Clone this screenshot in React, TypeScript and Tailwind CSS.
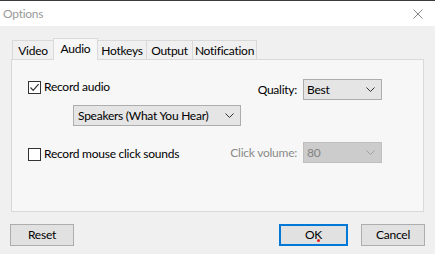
import React from 'react';

function Chevron({ color = '#333' }: { color?: string }) {
  return (
    <svg width="9" height="5" viewBox="0 0 9 5" className="shrink-0">
      <path d="M0.5 0.5 L4.5 4.5 L8.5 0.5" fill="none" stroke={color} strokeWidth="1" />
    </svg>
  );
}

function Checkbox({ checked }: { checked?: boolean }) {
  return (
    <div className="w-[13px] h-[13px] border border-[#333] bg-white flex items-center justify-center shrink-0">
      {checked && (
        <svg width="11" height="11" viewBox="0 0 11 11">
          <path d="M1.5 5.5 L4.2 8.3 L9.6 2.2" fill="none" stroke="#333" strokeWidth="1.2" />
        </svg>
      )}
    </div>
  );
}

export default function App() {
  const tabs = [
    { label: 'Video', w: 'w-[42px]' },
    { label: 'Audio', w: 'w-[45px]', active: true },
    { label: 'Hotkeys', w: 'w-[50px]' },
    { label: 'Output', w: 'w-[47px]' },
    { label: 'Notification', w: 'w-[65px]' },
  ];

  return (
    <div
      className="w-[435px] h-[254px] bg-[#f0f0f0] text-[12px] tracking-[-0.25px] text-black flex flex-col overflow-hidden whitespace-nowrap"
      style={{ fontFamily: 'Lato, "Noto Sans", sans-serif' }}
    >
      {/* title bar */}
      <div className="h-[26px] bg-white border-t border-[#3a3a3a] flex items-center justify-between pl-[3px] pr-[12px] shrink-0">
        <span className="text-[#9a9a9a] text-[12px] leading-none">Options</span>
        <svg width="10" height="10" viewBox="0 0 10 10">
          <path d="M0.5 0.5 L9.5 9.5 M9.5 0.5 L0.5 9.5" stroke="#888" strokeWidth="1" />
        </svg>
      </div>

      {/* tabs */}
      <div className="pl-[12px] pt-[11px] flex items-end h-[33px] shrink-0 relative z-10">
        {tabs.map((t) =>
          t.active ? (
            <div
              key={t.label}
              className={`${t.w} h-[22px] -ml-px mb-[-1px] bg-[#f7f7f7] border border-b-0 border-[#d9d9d9] flex items-start justify-center pt-[2px] leading-[16px]`}
            >
              {t.label}
            </div>
          ) : (
            <div
              key={t.label}
              className={`${t.w} h-[19px] -ml-px first:ml-0 border border-b-0 border-[#d9d9d9] flex items-center justify-center leading-none pt-[2px]`}
            >
              {t.label}
            </div>
          )
        )}
      </div>

      {/* panel */}
      <div className="mx-[11px] w-[413px] h-[153px] bg-[#f7f7f7] border border-[#d9d9d9] shrink-0 relative">
        <div className="pl-[16px] pt-[20px] flex">
          <div className="flex flex-col w-[214px]">
            <div className="flex items-center gap-[3px] h-[14px]">
              <Checkbox checked />
              <span className="leading-none">Record audio</span>
            </div>
            <div className="ml-[45px] mt-[11px] w-[168px] h-[21px] bg-[#e5e5e5] border border-[#adadad] flex items-center justify-between pl-[4px] pr-[6px]">
              <span className="leading-none">Speakers (What You Hear)</span>
              <Chevron />
            </div>
            <div className="flex items-center gap-[3px] h-[14px] mt-[21px]">
              <Checkbox />
              <span className="leading-none">Record mouse click sounds</span>
            </div>
          </div>
          <div className="flex flex-col w-[140px] -mt-[1px]">
            <div className="flex items-center justify-end h-[21px]">
              <span className="leading-none mr-[6px]">Quality:</span>
              <div className="w-[79px] h-[21px] shrink-0 bg-[#e5e5e5] border border-[#adadad] flex items-center justify-between pl-[3px] pr-[6px]">
                <span className="leading-none">Best</span>
                <Chevron />
              </div>
            </div>
            <div className="flex items-center justify-end h-[21px] mt-[42px]">
              <span className="leading-none mr-[6px] text-[#8a8a8a] shrink-0">Click volume:</span>
              <div className="w-[79px] h-[21px] shrink-0 bg-[#cccccc] border border-[#bfbfbf] flex items-center justify-between pl-[3px] pr-[6px]">
                <span className="leading-none text-[#838383]">80</span>
                <Chevron color="#a0a0a0" />
              </div>
            </div>
          </div>
        </div>
      </div>

      {/* buttons */}
      <div className="flex items-center px-[10px] mt-[12px] h-[22px] shrink-0">
        <button className="w-[64px] h-[22px] bg-[#e1e1e1] border border-[#adadad] leading-none">Reset</button>
        <div className="flex-1" />
        <button className="w-[69px] h-[22px] bg-[#e1e1e1] border-2 border-[#0078d7] leading-none relative">
          OK
          <span className="absolute left-[36px] top-[13px] w-[3px] h-[3px] rounded-full bg-[#e0201a]" />
        </button>
        <button className="ml-[13px] w-[64px] h-[22px] bg-[#e1e1e1] border border-[#adadad] leading-none">Cancel</button>
      </div>
    </div>
  );
}
